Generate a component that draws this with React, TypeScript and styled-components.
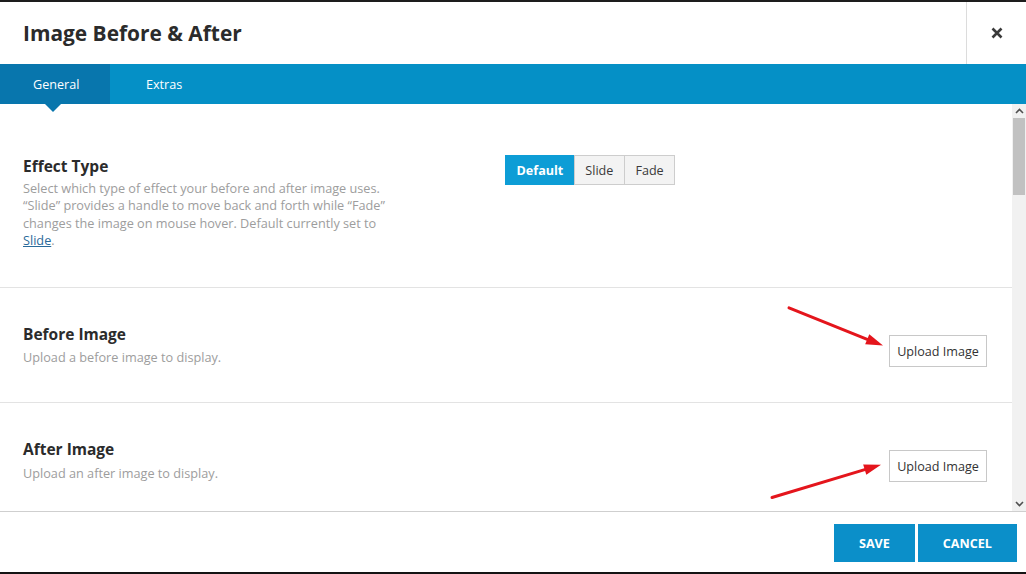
import styled, { createGlobalStyle } from "styled-components";

const GlobalStyle = createGlobalStyle`
  html, body {
    margin: 0;
    padding: 0;
    background: #fff;
  }
  * {
    box-sizing: border-box;
  }
`;

// Whole lightbox
const Modal = styled.div`
  position: relative;
  height: 100vh;
  display: flex;
  flex-direction: column;
  border-top: 2px solid #1d1d1d;
  border-bottom: 2px solid #141414;
  font-family: "Open Sans", "Noto Sans", Arial, sans-serif;
  color: #333;
  overflow: hidden;
`;

const Header = styled.div`
  height: 62px;
  display: flex;
  align-items: stretch;
  flex-shrink: 0;
`;

const Title = styled.h1`
  flex: 1;
  margin: 0;
  padding-left: 23px;
  display: flex;
  align-items: center;
  font-size: 20.9px;
  font-weight: 700;
  color: #2b2b2b;
`;

const CloseButton = styled.button`
  width: 60px;
  border: none;
  border-left: 1px solid #dcdcdc;
  background: transparent;
  display: flex;
  align-items: center;
  justify-content: center;
  padding: 0 0 0 1px;
  color: #3a3a3a;
  cursor: pointer;
`;

// Tabs
const TabBar = styled.div`
  height: 40px;
  display: flex;
  background: #0590c6;
  flex-shrink: 0;
  position: relative;
  z-index: 2;
`;

const Tab = styled.div<{ $active?: boolean }>`
  position: relative;
  display: flex;
  align-items: center;
  padding: 0 ${(p) => (p.$active ? "33px 0 33px" : "36px")};
  width: ${(p) => (p.$active ? "110px" : "auto")};
  font-size: 12.6px;
  color: #fff;
  background: ${(p) => (p.$active ? "#0876ad" : "transparent")};
  cursor: pointer;

  ${(p) =>
    p.$active &&
    `
    &::after {
      content: "";
      position: absolute;
      left: 45px;
      bottom: -8px;
      border-left: 8px solid transparent;
      border-right: 8px solid transparent;
      border-top: 8px solid #0876ad;
    }
  `}
`;

// Body with fake scrollbar
const BodyRow = styled.div`
  flex: 1;
  display: flex;
  min-height: 0;
  border-bottom: 1px solid #cfcfcf;
`;

const Content = styled.div`
  flex: 1;
  overflow: hidden;
`;

const Section = styled.div<{ $pt: number; $pb: number }>`
  display: grid;
  grid-template-columns: 482px 1fr;
  padding: ${(p) => p.$pt}px 25px ${(p) => p.$pb}px 23px;
  border-bottom: 1px solid #e3e3e3;
`;

const Label = styled.div`
  display: flex;
  flex-direction: column;
`;

const LabelTitle = styled.div`
  font-size: 15.5px;
  font-weight: 700;
  line-height: 22px;
  color: #2b2b2b;
`;

const Help = styled.div<{ $gap?: number }>`
  margin-top: ${(p) => p.$gap ?? 2.5}px;
  font-size: 12.7px;
  line-height: 17.5px;
  color: #9d9d9d;
  white-space: nowrap;

  a {
    color: #2a6a9a;
    text-decoration: underline;
  }
`;

const Field = styled.div<{ $align: "start" | "end"; $offset: number }>`
  display: flex;
  justify-content: ${(p) => (p.$align === "end" ? "flex-end" : "flex-start")};
  align-items: flex-start;
  padding-top: ${(p) => p.$offset}px;
`;

const ButtonGroup = styled.div`
  display: flex;
`;

const GroupButton = styled.button<{ $active?: boolean }>`
  height: 30px;
  padding: 0 10.5px;
  font-family: inherit;
  font-size: 12.6px;
  font-weight: ${(p) => (p.$active ? 700 : 400)};
  color: ${(p) => (p.$active ? "#fff" : "#3a3a3a")};
  background: ${(p) => (p.$active ? "#0d9dd6" : "#f3f3f3")};
  border: 1px solid ${(p) => (p.$active ? "#0d9dd6" : "#cdcdcd")};
  margin-left: -1px;
  cursor: pointer;

  &:first-child {
    margin-left: 0;
  }
`;

const UploadButton = styled.button`
  height: 32px;
  width: 98px;
  padding: 0;
  font-family: inherit;
  font-size: 12.6px;
  color: #333;
  background: #fff;
  border: 1px solid #c8c8c8;
  cursor: pointer;
`;

const ScrollTrack = styled.div`
  width: 14px;
  background: #f1f1f1;
  display: flex;
  flex-direction: column;
`;

const ScrollArrow = styled.div`
  height: 14px;
  display: flex;
  align-items: center;
  justify-content: center;
  color: #505050;
`;

const ScrollThumb = styled.div`
  height: 77px;
  margin: 0 1px;
  background: #c1c1c1;
`;

const ScrollSpace = styled.div`
  flex: 1;
`;

// Footer
const Footer = styled.div`
  height: 60px;
  flex-shrink: 0;
  display: flex;
  justify-content: flex-end;
  align-items: flex-start;
  gap: 3px;
  padding: 12px 9px 0 0;
`;

const FooterButton = styled.button`
  height: 38px;
  padding: 0 25px;
  border: none;
  background: #0b8fc9;
  color: #fff;
  font-family: inherit;
  font-size: 12.6px;
  font-weight: 700;
  text-transform: uppercase;
  cursor: pointer;
`;

// Red annotation arrows drawn over the screenshot
const Annotations = styled.svg`
  position: absolute;
  left: 0;
  top: 0;
  width: 100%;
  height: 100%;
  pointer-events: none;
  z-index: 5;
`;

function Arrow({ x1, y1, x2, y2 }: { x1: number; y1: number; x2: number; y2: number }) {
  const angle = Math.atan2(y2 - y1, x2 - x1);
  const len = 17;
  const half = 5.5;
  const bx = x2 - len * Math.cos(angle);
  const by = y2 - len * Math.sin(angle);
  const px = -Math.sin(angle) * half;
  const py = Math.cos(angle) * half;
  return (
    <g>
      <line x1={x1} y1={y1} x2={bx} y2={by} stroke="#e4151c" strokeWidth={3} strokeLinecap="round" />
      <polygon points={`${x2},${y2} ${bx + px},${by + py} ${bx - px},${by - py}`} fill="#e4151c" />
    </g>
  );
}

export default function App() {
  return (
    <>
      <GlobalStyle />
      <Modal>
        <Header>
          <Title>Image Before &amp; After</Title>
          <CloseButton aria-label="Close">
            <svg width="12" height="12" viewBox="0 0 12 12">
              <path d="M1.5 1.5 L10.5 10.5 M10.5 1.5 L1.5 10.5" stroke="currentColor" strokeWidth="2.6" />
            </svg>
          </CloseButton>
        </Header>

        <TabBar>
          <Tab $active>General</Tab>
          <Tab>Extras</Tab>
        </TabBar>

        <BodyRow>
          <Content>
            <Section $pt={51} $pb={37.5}>
              <Label>
                <LabelTitle>Effect Type</LabelTitle>
                <Help>
                  Select which type of effect your before and after image uses.
                  <br />
                  “Slide” provides a handle to move back and forth while “Fade”
                  <br />
                  changes the image on mouse hover. Default currently set to
                  <br />
                  <a href="#">Slide</a>.
                </Help>
              </Label>
              <Field $align="start" $offset={0}>
                <ButtonGroup>
                  <GroupButton $active>Default</GroupButton>
                  <GroupButton>Slide</GroupButton>
                  <GroupButton>Fade</GroupButton>
                </ButtonGroup>
              </Field>
            </Section>

            <Section $pt={34.5} $pb={35}>
              <Label>
                <LabelTitle>Before Image</LabelTitle>
                <Help $gap={4.5}>Upload a before image to display.</Help>
              </Label>
              <Field $align="end" $offset={12.5}>
                <UploadButton>Upload Image</UploadButton>
              </Field>
            </Section>

            <Section $pt={35} $pb={35}>
              <Label>
                <LabelTitle>After Image</LabelTitle>
                <Help $gap={4.5}>Upload an after image to display.</Help>
              </Label>
              <Field $align="end" $offset={12}>
                <UploadButton>Upload Image</UploadButton>
              </Field>
            </Section>
          </Content>

          <ScrollTrack>
            <ScrollArrow>
              <svg width="9" height="6" viewBox="0 0 9 6">
                <path d="M1 5 L4.5 1.5 L8 5" fill="none" stroke="currentColor" strokeWidth="1.6" />
              </svg>
            </ScrollArrow>
            <ScrollThumb />
            <ScrollSpace />
            <ScrollArrow>
              <svg width="9" height="6" viewBox="0 0 9 6">
                <path d="M1 1 L4.5 4.5 L8 1" fill="none" stroke="currentColor" strokeWidth="1.6" />
              </svg>
            </ScrollArrow>
          </ScrollTrack>
        </BodyRow>

        <Footer>
          <FooterButton>Save</FooterButton>
          <FooterButton>Cancel</FooterButton>
        </Footer>

        <Annotations viewBox="0 0 1026 574" preserveAspectRatio="none">
          <Arrow x1={789} y1={308} x2={883} y2={346} />
          <Arrow x1={772} y1={499} x2={881} y2={466} />
        </Annotations>
      </Modal>
    </>
  );
}
